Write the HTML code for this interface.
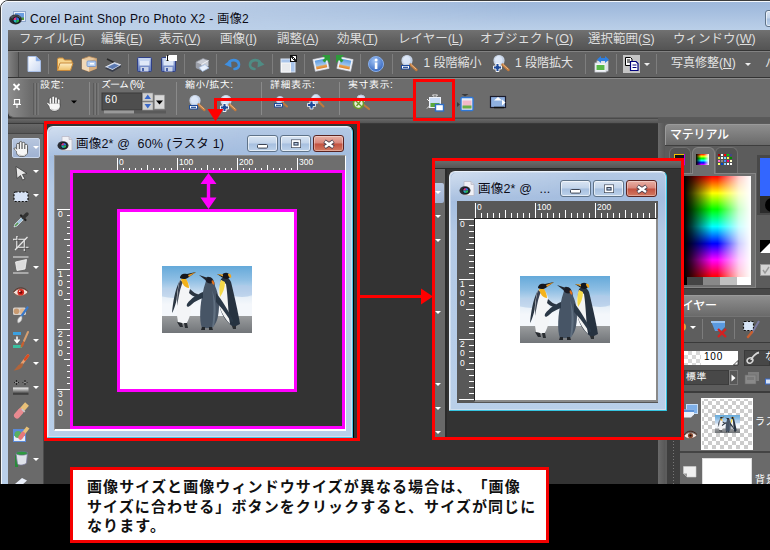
<!DOCTYPE html>
<html lang="ja">
<head>
<meta charset="utf-8">
<title>Corel Paint Shop Pro Photo X2 - 画像2</title>
<style>
html,body{margin:0;padding:0;background:#fff;}
body{width:770px;height:550px;overflow:hidden;position:relative;font-family:"Liberation Sans","Noto Sans CJK JP",sans-serif;font-size:12px;}
.a{position:absolute;}
#root{position:absolute;left:0;top:0;width:770px;height:550px;overflow:hidden;}
#frame{left:0;top:0;width:790px;height:560px;border:1px solid #3c3c3c;border-radius:8px 0 0 0;box-sizing:border-box;
 background:linear-gradient(180deg,#9db7da 0px,#a5bedf 10px,#b3c9e5 22px,#bbd0e9 30px,#bad0ea 100%);}
#glare{left:1px;top:1px;width:520px;height:29px;border-radius:7px 0 0 0;background:linear-gradient(90deg,rgba(255,255,255,.48) 0,rgba(255,255,255,.36) 150px,rgba(255,255,255,0) 100%);-webkit-mask-image:linear-gradient(180deg,#000 0,rgba(0,0,0,.1) 100%);mask-image:linear-gradient(180deg,#000 0,rgba(0,0,0,.1) 100%);}
#frame:before{content:"";position:absolute;left:0;top:0;right:0;bottom:0;border:1px solid #f4f8fc;border-radius:7px 0 0 0;}
#capbtn{left:765px;top:10px;width:20px;height:17px;box-sizing:border-box;border:1px solid #5f7389;border-radius:3px;background:linear-gradient(180deg,#d9e5f3 0,#c2d4ea 48%,#a6bfdf 52%,#bdd2ea 100%);box-shadow:inset 0 0 0 1px rgba(255,255,255,.6);}
#titletext{left:30px;top:9px;font-size:12px;color:#0a0a14;white-space:nowrap;letter-spacing:0.35px;}
#client{left:8px;top:30px;width:770px;height:520px;background:#333;}
#menubar{left:0;top:0;width:770px;height:20px;background:linear-gradient(180deg,#717171 0,#626262 45%,#545454 100%);border-bottom:1px solid #353535;}
.mi{position:absolute;top:1px;color:#dedede;font-size:12.5px;white-space:nowrap;line-height:17px;}
.mi u{text-decoration:underline;text-underline-offset:1px;}
#toolbar{left:0;top:21px;width:770px;height:26px;background:#626262;border-top:1px solid #828282;box-sizing:border-box;}
#tbgrip{left:0;top:0;width:10px;height:25px;background:linear-gradient(90deg,#828282,#626262);border-right:1px solid #474747;}
.sep{position:absolute;width:1px;background:#7a7a7a;top:3px;height:20px;}
.tbt{position:absolute;top:4px;color:#e4e4e4;font-size:12px;white-space:nowrap;line-height:17px;}
#optbar{left:0;top:48px;width:770px;height:40px;background:#6c6c6c;border:1px solid #8a8a8a;border-bottom-color:#5a5a5a;border-right:none;border-radius:0 0 0 6px;box-sizing:border-box;}
.ol{position:absolute;top:2px;color:#fff;font-size:10px;letter-spacing:.5px;white-space:nowrap;line-height:11px;font-family:"Liberation Sans","IPAGothic","Noto Sans CJK JP",sans-serif;}
.grip2{position:absolute;top:6px;width:4px;height:31px;border-left:1px solid #4a4a4a;border-right:1px solid #4a4a4a;box-sizing:border-box;}
.osep{position:absolute;top:3px;width:1px;height:34px;background:#555;}
#palette{left:8px;top:124px;width:36px;height:430px;background:#6a6a6a;border-right:1px solid #4c4c4c;box-sizing:border-box;}
#palgrip{left:0;top:0;width:35px;height:9px;background:linear-gradient(180deg,#686868,#575757);border-bottom:1px solid #454545;}
#palsel{left:4px;top:14px;width:28px;height:20px;background:linear-gradient(180deg,#b7c6de,#9fb2d2);border:1px solid #c9d6ea;border-radius:2px;box-sizing:border-box;}
.dd{position:absolute;width:0;height:0;border-left:3px solid transparent;border-right:3px solid transparent;border-top:3px solid #fff;}
.win{position:absolute;box-sizing:border-box;border:1px solid #eaf1fa;border-right-color:#4cc6e6;border-bottom-color:#4cc6e6;border-radius:6px 6px 1px 1px;background:linear-gradient(180deg,#b4c9e5 0,#a4bddf 26px,#b3c9e5 60px,#b9cfe9 100%);}
.win:before{content:"";position:absolute;left:0;top:0;right:0;bottom:0;border:1px solid rgba(255,255,255,.35);border-radius:5px 5px 0 0;}
.wglare{position:absolute;left:1px;top:1px;width:65%;height:28px;border-radius:5px 0 0 0;background:linear-gradient(90deg,rgba(255,255,255,.38) 0,rgba(255,255,255,.2) 40%,rgba(255,255,255,0) 100%);-webkit-mask-image:linear-gradient(180deg,#000 0,rgba(0,0,0,.15) 100%);mask-image:linear-gradient(180deg,#000 0,rgba(0,0,0,.15) 100%);}
.wtitle{position:absolute;left:28px;top:10px;letter-spacing:.2px;font-size:12.5px;color:#0c0c18;white-space:pre;line-height:15px;}
.wb{position:absolute;top:8px;height:17px;box-sizing:border-box;border:1px solid #5f7389;border-radius:3px;background:linear-gradient(180deg,#d9e5f3 0,#c2d4ea 48%,#a6bfdf 52%,#bdd2ea 100%);box-shadow:inset 0 0 0 1px rgba(255,255,255,.6);}
.wb.cl{border-color:#5a2320;background:linear-gradient(180deg,#e9b0a5 0,#d8867a 48%,#c2503f 52%,#d27a62 100%);box-shadow:inset 0 0 0 1px rgba(255,255,255,.35);}
.mg{position:absolute;box-sizing:border-box;border:3px solid #ff00ff;}
.red{position:absolute;box-sizing:border-box;border:3px solid #ff0000;}
#caption{left:70px;top:467px;width:479px;height:76px;background:#fff;box-sizing:border-box;border:3px solid #f40000;}
#captxt{left:14px;top:7px;font-weight:bold;font-size:15px;letter-spacing:1.1px;line-height:19.7px;color:#111;white-space:nowrap;text-spacing-trim:space-all;}
#band{left:0;top:484px;width:770px;height:66px;background:#000;}
#rpanel{left:660px;top:118px;width:110px;height:366px;background:#5c5c5c;}
.ph{position:absolute;background:linear-gradient(180deg,#8e8e8e 0,#7c7c7c 50%,#6a6a6a 100%);border-top:1px solid #9a9a9a;border-left:1px solid #9a9a9a;border-radius:4px 0 0 0;box-sizing:border-box;color:#fff;font-size:12px;font-weight:500;letter-spacing:-.2px;white-space:nowrap;}
svg{position:absolute;overflow:visible;}
svg text{font-family:"Liberation Sans","Noto Sans CJK JP",sans-serif;}
</style>
</head>
<body>
<div id="root">
<div id="frame" class="a"></div>
<div id="glare" class="a"></div>
<svg class="a" style="left:9px;top:10px" width="17" height="15" viewBox="0 0 17 15">
<rect x="4.500" y="1.500" width="12" height="10" fill="#e8eef8" stroke="#8ea6cc" stroke-width="1"/>
<rect x="6" y="3" width="9" height="5" fill="#6b9ee0"/><rect x="6" y="7.500" width="9" height="2.500" fill="#4f9a3c"/>
<ellipse cx="6.500" cy="9.500" rx="6.300" ry="5" fill="#2a2c34"/>
<ellipse cx="6.500" cy="7" rx="5" ry="1.800" fill="#5a5e6a" opacity=".7"/>
<circle cx="7.300" cy="10" r="3.600" fill="#0d0f15"/>
<path d="M4.500 10a2.800 2.800 0 0 1 2.800 -2.800v2.800z" fill="#e03a8a"/>
<path d="M7.300 7.200a2.800 2.800 0 0 1 2.800 2.800h-2.800z" fill="#3b6fe0"/>
<path d="M10.100 10a2.800 2.800 0 0 1 -2.800 2.800v-2.800z" fill="#2fb84a"/>
<path d="M7.300 12.800a2.800 2.800 0 0 1 -2.800 -2.800h2.800z" fill="#25b0c0"/>
</svg>
<div id="capbtn" class="a"></div>
<div id="titletext" class="a">Corel Paint Shop Pro Photo X2 - 画像2</div>
<div id="client" class="a">
<div id="menubar" class="a">
<span class="mi" style="left:11px">ファイル(<u>F</u>)</span>
<span class="mi" style="left:93px">編集(<u>E</u>)</span>
<span class="mi" style="left:151px">表示(<u>V</u>)</span>
<span class="mi" style="left:212px">画像(<u>I</u>)</span>
<span class="mi" style="left:269px">調整(<u>A</u>)</span>
<span class="mi" style="left:329px">効果(<u>T</u>)</span>
<span class="mi" style="left:390px">レイヤー(<u>L</u>)</span>
<span class="mi" style="left:472px">オブジェクト(<u>O</u>)</span>
<span class="mi" style="left:580px">選択範囲(<u>S</u>)</span>
<span class="mi" style="left:665px">ウィンドウ(<u>W</u>)</span>
</div>
<div id="toolbar" class="a"><div id="tbgrip" class="a"></div>
</div>
<div id="optbar" class="a"><div class="a" style="left:0;top:0;width:22px;height:38px;border-radius:0 0 0 5px;background:linear-gradient(90deg,#8c8c8c,#6c6c6c)"></div>
</div>
</div>
<svg class="a" style="left:0;top:0" width="770" height="550" viewBox="0 0 770 550"><defs>
<linearGradient id="gpage" x1="0" y1="0" x2="1" y2="1"><stop offset="0" stop-color="#ffffff"/><stop offset="1" stop-color="#c9d8f2"/></linearGradient>
<linearGradient id="gfold" x1="0" y1="0" x2="0" y2="1"><stop offset="0" stop-color="#fdeec4"/><stop offset="1" stop-color="#eec06a"/></linearGradient>
<linearGradient id="gfl" x1="0" y1="0" x2="0" y2="1"><stop offset="0" stop-color="#a9b9e2"/><stop offset="1" stop-color="#5f78ba"/></linearGradient>
<linearGradient id="glens" x1="0" y1="0" x2="1" y2="1"><stop offset="0" stop-color="#f4f8ff"/><stop offset="1" stop-color="#9db8e0"/></linearGradient>
<radialGradient id="ginfo" cx=".4" cy=".3" r=".8"><stop offset="0" stop-color="#9cc0f4"/><stop offset="1" stop-color="#2a5cb8"/></radialGradient>
<linearGradient id="gphoto" x1="0" y1="0" x2="0" y2="1"><stop offset="0" stop-color="#5b9ae0"/><stop offset=".6" stop-color="#9cc4ee"/><stop offset=".75" stop-color="#e8a04a"/><stop offset="1" stop-color="#d88030"/></linearGradient>
</defs><rect x="48" y="54" width="1" height="20" fill="#7e7e7e"/><rect x="128" y="54" width="1" height="20" fill="#7e7e7e"/><rect x="184" y="54" width="1" height="20" fill="#7e7e7e"/><rect x="216" y="54" width="1" height="20" fill="#7e7e7e"/><rect x="272" y="54" width="1" height="20" fill="#7e7e7e"/><rect x="304" y="54" width="1" height="20" fill="#7e7e7e"/><rect x="360" y="54" width="1" height="20" fill="#7e7e7e"/><rect x="392" y="54" width="1" height="20" fill="#7e7e7e"/><rect x="585" y="54" width="1" height="20" fill="#7e7e7e"/><rect x="616" y="54" width="1" height="20" fill="#7e7e7e"/><rect x="656" y="54" width="1" height="20" fill="#7e7e7e"/><g transform="translate(27 56)"><path d="M1 0.500h8l4.500 4.500v10.500h-12.500z" fill="url(#gpage)" stroke="#a9bfe6" stroke-width="1"/><path d="M9 0.500v4.500h4.500z" fill="#7da6e8" stroke="#a9bfe6" stroke-width=".6"/></g><g transform="translate(57 57)"><path d="M0.500 13.500v-11q0-1.500 1.500-1.500h4l1.500 2h6q1.500 0 1.500 1.500v2" fill="#f6d48c" stroke="#c98a3a" stroke-width="1"/><path d="M0.500 13.500l2.500-7.500h13l-2.500 7.500z" fill="url(#gfold)" stroke="#c98a3a" stroke-width="1"/></g><g transform="translate(81 56)"><path d="M1 3l7-2.500 7.500 2v10l-7.500 3-7-2.500z" fill="#e8c9a0" stroke="#b98a58" stroke-width=".8"/><path d="M8 5.200l7.500-2.700v10l-7.500 3z" fill="#d9b080"/><path d="M1 3l7 2.200v10.300l-7-2.500z" fill="#f0d8b8"/><rect x="6" y="5" width="9" height="5.500" rx="1" fill="#b8d0f0" stroke="#6d8fc8" stroke-width=".8"/><rect x="9" y="7" width="4" height="1.500" fill="#fff"/></g><g transform="translate(105 57)"><path d="M2 2L12 7" stroke="#2a2a2a" stroke-width="1.600"/><path d="M0.500 10l9-4.500 6.500 2.500-8.500 5z" fill="#c8d4ea" stroke="#e8eef8" stroke-width=".8"/><path d="M2.500 10l7-3.300 4.500 1.800-6.500 3.600z" fill="#5a78b0"/><path d="M0.500 10v1.800l7 3.200 8.500-5v-2l-8.500 5z" fill="#3a3f4c"/></g><g transform="translate(137 57)"><rect x="0.500" y="0.500" width="14" height="14" rx="1" fill="url(#gfl)" stroke="#2f3f86" stroke-width="1"/><rect x="2.500" y="1" width="10" height="7.500" fill="#dfe8f8"/><rect x="2.500" y="1" width="10" height="3" fill="#c4d4f0"/><rect x="3.500" y="10" width="8" height="4.500" fill="#c8d2e8"/><rect x="5" y="11" width="2" height="3" fill="#4a63a8"/></g><g transform="translate(161 57)"><rect x="0.500" y="0.500" width="14" height="14" rx="1" fill="url(#gfl)" stroke="#2f3f86" stroke-width="1"/><rect x="2.500" y="1" width="10" height="7.500" fill="#dfe8f8"/><rect x="2.500" y="1" width="10" height="3" fill="#c4d4f0"/><rect x="3.500" y="10" width="8" height="4.500" fill="#c8d2e8"/><rect x="5" y="11" width="2" height="3" fill="#4a63a8"/><rect x="5" y="-2" width="11" height="6" fill="#fff"/><path d="M6.500 -1.500v5M5.500 -1.500h2M5.500 3.500h2" stroke="#111" stroke-width="1"/></g><g transform="translate(193 57)"><path d="M3 5l7-3.500 5.500 2v5.500l-7 4-5.500-2.500z" fill="#c9ccd4" stroke="#8e929c" stroke-width=".7"/><path d="M3 5l5.500 2.500v6l-5.500-2.500z" fill="#9a9ea8"/><path d="M8.500 7.500l7-4" stroke="#f0f2f6" stroke-width="1"/><path d="M6 10.500l6-3 4 3.500-6.500 3.500z" fill="#e8f0fc" stroke="#9ab4dc" stroke-width=".7"/></g><g transform="translate(224 59)"><path d="M5.500 2.500C9 0 14.500 1 15 5.500C15.300 8.500 12.500 10 10.500 10" fill="none" stroke="#3f8fe0" stroke-width="2.600" stroke-linecap="round"/><path d="M0.500 5.500L7 0.500L7.500 8.500Z" fill="#3f8fe0"/></g><g transform="translate(249 59)"><path d="M10.500 2.500C7 0 1.500 1 1 5.500C0.700 8.500 3.500 10 5.500 10" fill="none" stroke="#4f8c84" stroke-width="2.600" stroke-linecap="round"/><path d="M15.500 5.500L9 0.500L8.500 8.500Z" fill="#4f8c84"/></g><g transform="translate(280 55)"><rect x="1" y="4" width="14" height="13" fill="#a9c4ea" stroke="#dbe6f6" stroke-width="1"/><rect x="1.500" y="8" width="9" height="9" fill="#e8eaee" stroke="#f8f8f8" stroke-width="1"/><rect x="10" y="0" width="7" height="7" fill="#111"/><path d="M11.500 5.500l4-4M11.500 2.800v2.700h2.700M15.500 4.200v-2.700h-2.700" stroke="#fff" stroke-width="1" fill="none"/></g><g transform="translate(313 55)"><g transform="rotate(-12 8 9)"><rect x="1" y="3" width="14" height="12" fill="#f4f6fa" stroke="#d0d6e2" stroke-width=".6"/><rect x="2.500" y="4.500" width="11" height="9" fill="url(#gphoto)"/></g><path d="M9 0h8v8l-3-3-2.500 2.500-2-2 2.500-2.500z" fill="#2d9a3a"/></g><g transform="translate(336 55)"><g transform="translate(17 0) scale(-1 1)"><g transform="rotate(-12 8 9)"><rect x="1" y="3" width="14" height="12" fill="#f4f6fa" stroke="#d0d6e2" stroke-width=".6"/><rect x="2.500" y="4.500" width="11" height="9" fill="url(#gphoto)"/></g></g><path d="M8 0h-8v8l3-3 2.500 2.500 2-2-2.500-2.500z" fill="#2d9a3a"/></g><g transform="translate(368 56)"><circle cx="8" cy="8" r="7.500" fill="url(#ginfo)" stroke="#8ab0ea" stroke-width="1"/><rect x="6.800" y="6.500" width="2.600" height="6.500" fill="#fff"/><circle cx="8.100" cy="4" r="1.500" fill="#fff"/></g><g transform="translate(401 55)"><circle cx="6" cy="5.500" r="5" fill="url(#glens)" stroke="#c8d4e6" stroke-width="1.200"/><circle cx="6" cy="5.500" r="3.600" fill="#dfe9f8" opacity=".8"/><path d="M9.500 9.500L15.500 15" stroke="#c27a3c" stroke-width="2.400" stroke-linecap="round"/><path d="M9.800 9.300L15.300 14.300" stroke="#e9b98a" stroke-width="1"/><rect x="0.500" y="10.500" width="8" height="3.500" fill="#fff" stroke="#1e4a9a" stroke-width="1"/><rect x="2" y="11.700" width="5" height="1.200" fill="#1e4a9a"/></g><g transform="translate(493 55)"><circle cx="6" cy="5.500" r="5" fill="url(#glens)" stroke="#c8d4e6" stroke-width="1.200"/><circle cx="6" cy="5.500" r="3.600" fill="#dfe9f8" opacity=".8"/><path d="M9.500 9.500L15.500 15" stroke="#c27a3c" stroke-width="2.400" stroke-linecap="round"/><path d="M9.800 9.300L15.300 14.300" stroke="#e9b98a" stroke-width="1"/><path d="M3 8.500h3v2.500h2.500v3h-2.500v2.500h-3v-2.500h-2.500v-3h2.500z" fill="#1e4a9a" stroke="#fff" stroke-width=".9"/></g><g transform="translate(594 56)"><rect x="3" y="5" width="11" height="10" fill="#e8ecf2" stroke="#c8ccd4" stroke-width=".8"/><rect x="1" y="7" width="11" height="9" fill="#f4f6fa" stroke="#d0d4dc" stroke-width=".8"/><rect x="2.500" y="9" width="8" height="5" fill="#58b848"/><path d="M3 3.500l4-3.500v2h4v-2l4 3.500-4 3.500v-2h-4v2z" fill="#2f7fe0"/></g><g transform="translate(623 55)"><rect x="0" y="0" width="17" height="18" fill="#c4c4c4"/><path d="M2.500 2.500h5l1.500 1.500v6.500h-6.500z" fill="#fff" stroke="#000" stroke-width="1"/><path d="M4 5h3M4 7h3" stroke="#000" stroke-width="1"/><path d="M7.500 6.500h5.500l2 2v7h-7.500z" fill="#fff" stroke="#00007a" stroke-width="1.200"/><path d="M9.500 10h4M9.500 12.500h4" stroke="#00007a" stroke-width="1"/></g><path d="M644 63h6l-3 3z" fill="#eee"/><path d="M745 63h6l-3 3z" fill="#eee"/></svg><div class="tbt" style="left:423.500px;top:55px">1 段階縮小</div><div class="tbt" style="left:515px;top:55px">1 段階拡大</div><div class="tbt" style="left:671px;top:55px">写真修整(<u>N</u>)</div><div class="tbt" style="left:765px;top:55px">パ</div>
<svg class="a" style="left:0;top:0" width="770" height="550" viewBox="0 0 770 550"><path d="M13.500 84l6 6M19.500 84l-6 6" stroke="#fff" stroke-width="1.800"/><path d="M14.500 99.500h5v4.500h-5zM13 104.500h8M17 104.500v3.500" stroke="#fff" stroke-width="1.200" fill="none"/><rect x="33.5" y="83" width="1" height="32" fill="#4a4a4a"/><rect x="34.5" y="83" width="1" height="32" fill="#868686"/><rect x="36.5" y="83" width="1" height="32" fill="#4a4a4a"/><rect x="37.5" y="83" width="1" height="32" fill="#868686"/><rect x="93.5" y="83" width="1" height="32" fill="#4a4a4a"/><rect x="94.5" y="83" width="1" height="32" fill="#868686"/><rect x="96.5" y="83" width="1" height="32" fill="#4a4a4a"/><rect x="97.5" y="83" width="1" height="32" fill="#868686"/><rect x="89" y="82" width="1" height="33" fill="#8a8a8a"/><rect x="176" y="82" width="1" height="33" fill="#8a8a8a"/><rect x="261" y="82" width="1" height="33" fill="#8a8a8a"/><rect x="339" y="82" width="1" height="33" fill="#8a8a8a"/><g transform="translate(45.5 95.5)"><g transform="scale(1.100 1)"><g stroke="#4a4a4a" stroke-width=".8" fill="#f6f6f6"><path d="M5 12L1.300 8.300C0.500 7.300 1.800 6.200 2.800 7.200L5.500 10Z"/><rect x="3.300" y="2.300" width="2.500" height="9" rx="1.250"/><rect x="5.800" y="0.600" width="2.500" height="10" rx="1.250"/><rect x="8.300" y="1.300" width="2.500" height="10" rx="1.250"/><rect x="10.800" y="3.300" width="2.400" height="8" rx="1.200"/><path d="M3.300 8.500V11.500C3.300 14 5.500 15.500 8 15.500C11 15.500 13.200 14 13.200 11V8.500Z"/></g><path d="M3.800 8V11.500C4 13.500 6 15 8 15C10.500 15 12.700 13.800 12.700 11V8Z" fill="#f6f6f6"/><path d="M2.500 8.500L5 11" stroke="#f6f6f6" stroke-width="1.400"/><path d="M5 13.500C7 15 10 15 12 13" stroke="#c8c8c8" stroke-width="1" fill="none"/></g></g><path d="M71 100.500h6l-3 3z" fill="#000"/><rect x="102" y="93" width="40" height="17" fill="#4e4e4e" stroke="#3a3a3a" stroke-width="1"/><rect x="104" y="110.500" width="62" height="3" fill="#5a5a5a"/><rect x="104" y="110.500" width="30" height="3" fill="#9a9a9a"/><rect x="142.500" y="93" width="10.500" height="8" fill="#d0d0d0" stroke="#8a8a8a" stroke-width=".6"/><rect x="142.500" y="102" width="10.500" height="8" fill="#d0d0d0" stroke="#8a8a8a" stroke-width=".6"/><path d="M144.500 99h6.500l-3.250-4.500z" fill="#3a68c8"/><path d="M144.500 104h6.500l-3.250 4.500z" fill="#3a68c8"/><rect x="154.500" y="95" width="10" height="14" fill="#d8d8d8" stroke="#999" stroke-width=".6"/><path d="M156 100.500h7l-3.500 4z" fill="#000"/><g transform="translate(189 95)"><circle cx="6" cy="5.500" r="5" fill="url(#glens)" stroke="#c8d4e6" stroke-width="1.200"/><circle cx="6" cy="5.500" r="3.600" fill="#dfe9f8" opacity=".8"/><path d="M9.500 9.500L15.500 15" stroke="#c27a3c" stroke-width="2.400" stroke-linecap="round"/><path d="M9.800 9.300L15.300 14.300" stroke="#e9b98a" stroke-width="1"/><rect x="0.500" y="10.500" width="8" height="3.500" fill="#fff" stroke="#1e4a9a" stroke-width="1"/><rect x="2" y="11.700" width="5" height="1.200" fill="#1e4a9a"/></g><g transform="translate(220 95)"><circle cx="6" cy="5.500" r="5" fill="url(#glens)" stroke="#c8d4e6" stroke-width="1.200"/><circle cx="6" cy="5.500" r="3.600" fill="#dfe9f8" opacity=".8"/><path d="M9.500 9.500L15.500 15" stroke="#c27a3c" stroke-width="2.400" stroke-linecap="round"/><path d="M9.800 9.300L15.300 14.300" stroke="#e9b98a" stroke-width="1"/><path d="M3 8.500h3v2.500h2.500v3h-2.500v2.500h-3v-2.500h-2.500v-3h2.500z" fill="#1e4a9a" stroke="#fff" stroke-width=".9"/></g><g transform="translate(273 96)"><circle cx="7" cy="4" r="3.600" fill="url(#glens)" stroke="#b8c6dc" stroke-width="1"/><path d="M9.500 6.500L14 10.500" stroke="#c27a3c" stroke-width="2" stroke-linecap="round"/><rect x="1.500" y="7.500" width="8" height="3.500" fill="#fff" stroke="#1e4a9a" stroke-width="1"/><rect x="3" y="8.700" width="5" height="1.200" fill="#1e4a9a"/></g><g transform="translate(307 94)"><circle cx="9" cy="5" r="4.500" fill="url(#glens)" stroke="#b8c6dc" stroke-width="1"/><path d="M12 8L16.500 12.500" stroke="#c27a3c" stroke-width="2" stroke-linecap="round"/><path d="M3 7h3v2.500h2.500v3h-2.500v2.500h-3v-2.500h-2.500v-3h2.500z" fill="#1e4a9a" stroke="#fff" stroke-width=".8"/></g><g transform="translate(352 94)"><circle cx="9" cy="5" r="4" fill="url(#glens)" stroke="#b8c6dc" stroke-width="1"/><path d="M10 9.500L17 15" stroke="#c27a3c" stroke-width="2.200" stroke-linecap="round"/><circle cx="6.500" cy="9.500" r="5" fill="#e8f0d8" stroke="#6a9a2a" stroke-width="1.600"/><path d="M3 6l7 7M4.500 12l4-5" stroke="#6a9a2a" stroke-width="1.300"/></g><g transform="translate(427 95)"><path d="M0 4l2.500 2.500M2.500 11l-2.500 2.500M5.500 0h5l-2.500 2.500z" fill="#333" stroke="#eee" stroke-width="1"/><rect x="2.500" y="2.500" width="11" height="10" fill="#c9dcf6" stroke="#eef3fb" stroke-width="1"/><rect x="3.500" y="8" width="9" height="4" fill="#5aa83c"/><rect x="8.500" y="9.500" width="8" height="6.500" fill="#fff" stroke="#2f6fc8" stroke-width="1.400"/></g><g transform="translate(457 94)"><path d="M4.500 0h7l-3.500 2.500z" fill="#3a3a3a"/><path d="M0 8l3 2.500-3 2.500z" fill="#3a3a3a"/><rect x="4" y="3.500" width="12" height="13" rx="1" fill="#e8eef8" stroke="#2f78d8" stroke-width="1.400"/><rect x="5.500" y="6.500" width="9" height="8" fill="#f2b8c8"/><rect x="5.500" y="11.500" width="9" height="3" fill="#68b048"/></g><g transform="translate(490 95)"><rect x="0.500" y="1.500" width="15" height="11" fill="#8fb0e0" stroke="#1a1a2a" stroke-width="1.200"/><path d="M4 5.500h8l-4-3.500z" fill="#fff"/><path d="M12 4.500v6l3.500-3z" fill="#fff"/><path d="M4 12.500h10" stroke="#111" stroke-width="1.500"/></g></svg><div class="ol" style="left:40px;top:79px">設定:</div><div class="ol" style="left:101px;top:79px;letter-spacing:-1px">ズーム (%):</div><div class="ol" style="left:185px;top:79px">縮小/拡大:</div><div class="ol" style="left:270px;top:79px">詳細表示:</div><div class="ol" style="left:348px;top:79px">実寸表示:</div><div class="a" style="left:105px;top:94px;color:#fff;font-size:10px;letter-spacing:1px;line-height:11px">60</div>
<div class="a" style="left:8px;top:118px;width:762px;height:6px;background:linear-gradient(180deg,#4a4a4a 0,#4a4a4a 1px,#686868 1px,#545454 5px,#3a3a3a 5px)"></div>
<div id="palette" class="a"><div id="palgrip" class="a"></div><div id="palsel" class="a"></div>
</div><svg class="a" style="left:0;top:0" width="770" height="550" viewBox="0 0 770 550"><g transform="translate(13 141)"><g transform="scale(1.100 1)"><g stroke="#4a4a4a" stroke-width=".8" fill="#f6f6f6"><path d="M5 12L1.300 8.300C0.500 7.300 1.800 6.200 2.800 7.200L5.500 10Z"/><rect x="3.300" y="2.300" width="2.500" height="9" rx="1.250"/><rect x="5.800" y="0.600" width="2.500" height="10" rx="1.250"/><rect x="8.300" y="1.300" width="2.500" height="10" rx="1.250"/><rect x="10.800" y="3.300" width="2.400" height="8" rx="1.200"/><path d="M3.300 8.500V11.500C3.300 14 5.500 15.500 8 15.500C11 15.500 13.200 14 13.200 11V8.500Z"/></g><path d="M3.800 8V11.500C4 13.500 6 15 8 15C10.500 15 12.700 13.800 12.700 11V8Z" fill="#f6f6f6"/><path d="M2.500 8.500L5 11" stroke="#f6f6f6" stroke-width="1.400"/><path d="M5 13.500C7 15 10 15 12 13" stroke="#c8c8c8" stroke-width="1" fill="none"/></g></g><path d="M33 146h6l-3 3z" fill="#fff"/><g transform="translate(15 166)"><path d="M1 0.500L12 7.500L7.500 8.500L10 13L7.500 14L5.500 9.500L2 12.500Z" fill="#e8e8e8" stroke="#3a3a3a" stroke-width=".8"/></g><path d="M33 170h6l-3 3z" fill="#fff"/><g transform="translate(13.5 191.5)"><rect x="0.500" y="0.500" width="14" height="9.500" rx="1.500" fill="#d7e3f6" stroke="#111" stroke-width="1.200" stroke-dasharray="2 1.500"/></g><path d="M33 194h6l-3 3z" fill="#fff"/><g transform="translate(13 212)"><path d="M1 15L2 12L9 5L11 7L4 14Z" fill="#9fc0d8" stroke="#dfe8f0" stroke-width=".7"/><path d="M2 14l3-3" stroke="#5a9a4a" stroke-width="1.400"/><path d="M8 3.500l4.500 4.500" stroke="#222" stroke-width="2.200" stroke-linecap="round"/><path d="M10.500 5.500L14 2" stroke="#333" stroke-width="3.400" stroke-linecap="round"/></g><g transform="translate(13 236)"><path d="M4 0v11.500h11.500M0 3.500h11.500v11.500" fill="none" stroke="#e8e8e8" stroke-width="1.600"/><path d="M4 0v11.500h11.500M0 3.500h11.500v11.500" fill="none" stroke="#2a2a2a" stroke-width=".6" transform="translate(.8 .8)"/><path d="M2 14L14.500 1" stroke="#e8e8e8" stroke-width="1.200"/></g><g transform="translate(13 256.5)"><path d="M0 0.500h15.500M0 16.500h15.500" stroke="#e8e8e8" stroke-width="1.200"/><path d="M2.500 5.500l11-2.500-1.500 9.500-8 1.500z" fill="#dcdcdc" stroke="#f4f4f4" stroke-width=".8"/></g><path d="M33 266h6l-3 3z" fill="#fff"/><g transform="translate(13 286)"><path d="M0.500 6.500C4 1.500 11 1.500 15 6C11 11 4 11 0.500 6.500Z" fill="#f2e4dc" stroke="#8a5a4a" stroke-width=".8"/><circle cx="7.800" cy="6.300" r="3.300" fill="#d8281e"/><circle cx="7.800" cy="6.300" r="1.500" fill="#7a0a08"/><circle cx="6.800" cy="5.300" r=".8" fill="#fff"/><path d="M0.500 6C4 0.500 11 0.500 15 5.500" fill="none" stroke="#5a3a30" stroke-width="1"/></g><g transform="translate(13 307)"><rect x="0" y="0.500" width="13" height="7.500" rx="1.500" fill="#d8d0c8"/><circle cx="3.500" cy="4.300" r="2.800" fill="#c89a70"/><circle cx="9.500" cy="4.300" r="2.800" fill="#e0b890"/><path d="M14.500 0.500L8.500 9" stroke="#3a78c8" stroke-width="2.200" stroke-linecap="round"/><path d="M8.500 9C10 12 8 15 5 16C4 13 5 10.500 8.500 9Z" fill="#e8e8e8" stroke="#aaa" stroke-width=".6"/></g><g transform="translate(13 332)"><rect x="0" y="0" width="8" height="3" fill="#3aa0e0"/><rect x="0" y="13" width="9" height="3" fill="#3ac0a0"/><path d="M4 4.500v5M1.500 7.500l2.500 3 2.500-3" fill="none" stroke="#fff" stroke-width="1.500"/><path d="M15 0L11 9" stroke="#d8a070" stroke-width="2" stroke-linecap="round"/><path d="M11 9C12 12 10 15 7.500 16C7.500 13 8.500 10.500 11 9Z" fill="#c86030"/></g><path d="M33 339h6l-3 3z" fill="#fff"/><g transform="translate(13 355)"><path d="M15 0.500L9 8.500" stroke="#e8a070" stroke-width="2.600" stroke-linecap="round"/><path d="M15 0.500L12 4.500" stroke="#d84a20" stroke-width="2.600" stroke-linecap="round"/><path d="M9.500 8C11.500 11 7 15.500 0.500 15.500C4 13 4 9.500 9.500 8Z" fill="#b0643a"/></g><path d="M33 362h6l-3 3z" fill="#fff"/><g transform="translate(13 379)"><path d="M1 3.500h5M3.500 1v5M9.500 3.500h5M12 1v5" stroke="#222" stroke-width="1.100"/><path d="M2 3.500h3M10.500 3.500h3" stroke="#ddd" stroke-width=".6"/><linearGradient id="gld" x1="0" y1="0" x2="0" y2="1"><stop offset="0" stop-color="#f2f2f2"/><stop offset="1" stop-color="#222"/></linearGradient><rect x="0" y="8.500" width="15.500" height="7" fill="url(#gld)"/></g><path d="M33 386h6l-3 3z" fill="#fff"/><g transform="translate(13 403)"><path d="M14 1L7 9" stroke="#e8c078" stroke-width="5" stroke-linecap="butt"/><path d="M7.500 8.500L4 12.500" stroke="#e88a90" stroke-width="6" stroke-linecap="round"/><path d="M8.800 6.200l3 2.600" stroke="#c8c8d0" stroke-width="1.600"/></g><g transform="translate(13 427)"><rect x="0" y="2" width="13" height="13" fill="#5a8ad8"/><rect x="1" y="9" width="11" height="5" fill="#e8eef8"/><circle cx="5" cy="7.500" r="3.500" fill="#58b060"/><path d="M15 0.500L10 7" stroke="#e8c078" stroke-width="3.600"/><path d="M10 7L7.500 10.500" stroke="#e8787a" stroke-width="4.600" stroke-linecap="round"/></g><g transform="translate(13 450)"><path d="M2 4v13h3v-9z" fill="#2a8a3a"/><path d="M3 3.500C5 1.500 12 1 14.500 2.500L13.500 13C11 15.500 6 15.500 4.500 14Z" fill="#dfe3ea" stroke="#7a7a9a" stroke-width=".8"/><ellipse cx="8.800" cy="3.200" rx="5.700" ry="1.900" fill="#2e9a40" stroke="#6a6a8a" stroke-width=".7"/></g><path d="M33 458h6l-3 3z" fill="#fff"/><g transform="translate(13 477)"><path d="M2 7L9 1l5 2.500L8 9z" fill="#e8eef8"/></g></svg><div>
</div>
<div class="a" style="left:658px;top:118px;width:112px;height:366px;background:#5c5c5c"></div><div class="a" style="left:658px;top:118px;width:112px;height:5px;background:#595959"></div><div class="a" style="left:658px;top:123px;width:7px;height:361px;background:linear-gradient(90deg,#6a6a6a,#585858)"></div><div class="ph" style="left:665px;top:124px;width:110px;height:21px;line-height:20px;padding-left:4px">マテリアル</div><div class="a" style="left:665px;top:145px;width:105px;height:1px;background:#3e3e3e"></div><div class="a" style="left:669px;top:147px;width:22px;height:26px;background:#535353;border:1px solid #707070;border-bottom:none;border-radius:6px 6px 0 0;box-sizing:border-box"></div><div class="a" style="left:715px;top:147px;width:23px;height:26px;background:#535353;border:1px solid #707070;border-bottom:none;border-radius:6px 6px 0 0;box-sizing:border-box"></div><div class="a" style="left:665px;top:173px;width:91px;height:115px;background:#6e6e6e;border:1px solid #858585;box-sizing:border-box"></div><div class="a" style="left:692px;top:147px;width:23px;height:27px;background:#6e6e6e;border:1px solid #858585;border-bottom:none;border-radius:6px 6px 0 0;box-sizing:border-box"></div><div class="a" style="left:684px;top:176px;width:67px;height:101px;background:linear-gradient(180deg,#f00 0%,#ff0 17%,#0f0 33%,#0ff 50%,#00f 67%,#f0f 83%,#f00 100%)"></div><div class="a" style="left:684px;top:176px;width:67px;height:101px;background:linear-gradient(90deg,#000 0%,rgba(0,0,0,.75) 12%,rgba(0,0,0,0) 42%,rgba(255,255,255,0) 50%,rgba(255,255,255,.8) 82%,#fff 100%)"></div><div class="a" style="left:684px;top:277px;width:67px;height:8px;background:linear-gradient(90deg,#000 0,#000 3px,#444 3px,#444 19px,#888 19px,#888 36px,#c0c0c0 36px,#c0c0c0 53px,#fff 53px)"></div><div class="a" style="left:757px;top:155px;width:13px;height:60px;background:#484848"></div><div class="a" style="left:760px;top:158px;width:10px;height:38px;background:#3366ff"></div><div class="a" style="left:760px;top:196px;width:10px;height:17px;background:#2c2c2c"></div><div class="a" style="left:765px;top:198px;width:14px;height:14px;border-radius:7px;background:#000"></div><svg class="a" style="left:760px;top:240px" width="10" height="14" viewBox="0 0 10 14"><rect width="10" height="13" fill="#000"/><path d="M0 13L10 3V13Z" fill="#fff"/></svg><div class="a" style="left:760px;top:264px;width:12px;height:12px;background:#d4d4d4;border:1px solid #999;box-sizing:border-box"></div><svg class="a" style="left:762px;top:266px" width="8" height="8" viewBox="0 0 8 8"><path d="M1 4l2 3 4-6" stroke="#999" stroke-width="1.400" fill="none"/></svg><div class="a" style="left:665px;top:288px;width:105px;height:7px;background:#484848;border-top:1px solid #3a3a3a"></div><div class="ph" style="left:665px;top:295px;width:110px;height:21px;line-height:20px;padding-left:4px">レイヤー</div><div class="a" style="left:665px;top:316px;width:105px;height:27px;background:#5e5e5e;border-top:1px solid #747474;border-bottom:1px solid #3a3a3a;box-sizing:border-box"></div><svg class="a" style="left:0;top:0" width="770" height="550" viewBox="0 0 770 550"><path d="M690 326h6l-3 3z" fill="#fff"/><rect x="702" y="319" width="1" height="20" fill="#7c7c7c"/><rect x="734" y="319" width="1" height="20" fill="#7c7c7c"/><circle cx="682" cy="327" r="4" fill="#e0a040"/><path d="M711 321h14v6l-4 4h-6z" fill="#5a9ae0"/><path d="M711 321h14v2h-14z" fill="#9cc4f0"/><path d="M718 329l8 8M726 329l-8 8" stroke="#d82020" stroke-width="2.200"/><rect x="743.500" y="321.500" width="10" height="9" rx="1" fill="#d8e6f8" stroke="#111" stroke-width="1.200" stroke-dasharray="2 1.500"/><path d="M759 321L752 333" stroke="#7a7aa0" stroke-width="2"/><path d="M752 332l-4 5" stroke="#c86030" stroke-width="2.400" stroke-linecap="round"/></svg><div class="a" style="left:684px;top:351px;width:54px;height:14px;background:#fff"></div><div class="a" style="left:684px;top:351px;width:17px;height:14px;background-color:#fff;background-image:conic-gradient(#d8d8d8 25%,#fff 0 50%,#d8d8d8 0 75%,#fff 0);background-size:8px 8px"></div><div class="a" style="left:704px;top:351px;font-size:10px;line-height:12px;color:#000;letter-spacing:.8px">100</div><svg class="a" style="left:733px;top:360px" width="5" height="5" viewBox="0 0 5 5"><path d="M0.500 5L5 0.500V5Z" fill="none" stroke="#222" stroke-width=".8"/></svg><div class="a" style="left:744px;top:350px;width:26px;height:16px;background:#474747;border:1px solid #3a3a3a;box-sizing:border-box"></div><svg class="a" style="left:746px;top:351px" width="16" height="14" viewBox="0 0 16 14"><path d="M13 1.500C10 2 6 6 5 9" stroke="#d8d8d8" stroke-width="1.800" fill="none"/><ellipse cx="4" cy="9.500" rx="3" ry="2.500" fill="none" stroke="#d8d8d8" stroke-width="1.500" transform="rotate(-35 4 9.500)"/></svg><div class="a" style="left:765px;top:351px;font-size:10px;line-height:12px;color:#fff">な</div><div class="a" style="left:684px;top:370px;width:45px;height:15px;background:#484848;border:1px solid #3c3c3c;box-sizing:border-box"></div><div class="a" style="left:686px;top:371px;font-size:10px;line-height:12px;color:#fff;letter-spacing:.5px;font-family:'Liberation Sans','IPAGothic',sans-serif">標準</div><div class="a" style="left:729px;top:370px;width:9px;height:15px;background:#585858;border:1px solid #7a7a7a;box-sizing:border-box"></div><svg class="a" style="left:731px;top:374px" width="5" height="8" viewBox="0 0 5 8"><path d="M0.500 0.500v7l4-3.500z" fill="#fff"/></svg><svg class="a" style="left:744px;top:371px" width="26" height="16" viewBox="0 0 26 16"><rect x="4" y="1" width="11" height="9" fill="#7e7e7e"/><rect x="1" y="4" width="11" height="9" fill="#8a8a8a" stroke="#6a6a6a" stroke-width=".6"/><rect x="3" y="6" width="7" height="3" fill="#7a7a7a"/><rect x="21.500" y="8" width="5" height="5" fill="#d8e4f6" stroke="#3a6ac8" stroke-width="1"/></svg><div class="a" style="left:665px;top:391px;width:105px;height:2px;background:#3c3c3c"></div><div class="a" style="left:680px;top:393px;width:90px;height:58px;background:#6a6a6a"></div><div class="a" style="left:680px;top:451px;width:90px;height:2px;background:#444"></div><div class="a" style="left:680px;top:453px;width:90px;height:31px;background:#6a6a6a"></div><div class="a" style="left:667px;top:393px;width:13px;height:91px;background:#3e3e3e"></div><div class="a" style="left:673px;top:393px;width:1px;height:91px;background:repeating-linear-gradient(180deg,#777 0,#777 1px,transparent 1px,transparent 3px)"></div><div class="a" style="left:701px;top:398px;width:52px;height:52px;background-color:#fff;background-image:conic-gradient(#ccc 25%,#fff 0 50%,#ccc 0 75%,#fff 0);background-size:8px 8px;background-position:2px 2px;border:1px solid #fff;box-sizing:border-box"></div><div class="a" style="left:702px;top:458px;width:50px;height:30px;background:#fff;border:1px solid #ddd;box-sizing:border-box"></div><svg class="a" style="left:683px;top:403px" width="16" height="40" viewBox="0 0 16 40"><rect x="3.500" y="1.500" width="11" height="9" fill="#7fb0e8" stroke="#c4dcf6" stroke-width="1"/><path d="M1 6.500h10v5l-3 3h-7z" fill="#e8f0fa"/><path d="M1 6.500h10v2.500h-10z" fill="#5a92d8"/><path d="M1 33C4 28.500 10 28.500 14 32.500C10 36.500 4 36.500 1 33Z" fill="#f4ece8" stroke="#6a4a40" stroke-width=".7"/><circle cx="7.500" cy="32.500" r="2.600" fill="#8a4a30"/><circle cx="7.500" cy="32.500" r="1.100" fill="#1a0a08"/><path d="M1 32C4 27 10 27 14 31.500" fill="none" stroke="#4a2a20" stroke-width="1"/></svg><svg class="a" style="left:683px;top:466px" width="14" height="12" viewBox="0 0 14 12"><path d="M0.500 0.500h12.500v10.500h-9l-3.500-3.500z" fill="#f0f0f0" stroke="#cfcfcf" stroke-width=".6"/><path d="M0.500 7.500h3.500v3.500z" fill="#9a9a9a"/></svg><div class="a" style="left:755px;top:416px;font-size:10px;line-height:12px;color:#fff;white-space:nowrap;letter-spacing:1px">ラスタ 1</div><div class="a" style="left:755px;top:474px;font-size:10px;line-height:12px;color:#fff;white-space:nowrap;letter-spacing:1px">背景</div>
<svg class="a" style="left:0;top:0" width="770" height="550" viewBox="0 0 770 550"><defs><linearGradient id="gt1" x1="0" y1="0" x2="0" y2="1"><stop offset="0" stop-color="#f00"/><stop offset=".2" stop-color="#ff0"/><stop offset=".4" stop-color="#0f0"/><stop offset=".6" stop-color="#0ff"/><stop offset=".8" stop-color="#00f"/><stop offset="1" stop-color="#f0f"/></linearGradient><linearGradient id="gt2" x1="0" y1="0" x2="1" y2="0"><stop offset="0" stop-color="#000"/><stop offset=".4" stop-color="#000" stop-opacity="0"/><stop offset=".6" stop-color="#fff" stop-opacity="0"/><stop offset="1" stop-color="#fff"/></linearGradient></defs><rect x="674.500" y="154.500" width="10" height="10" fill="#111" stroke="#f0c000" stroke-width="1"/><path d="M684.500 154v11h-10" fill="none" stroke="#c000e0" stroke-width="1"/><rect x="696" y="154" width="13" height="11" fill="url(#gt1)"/><rect x="696" y="154" width="13" height="11" fill="url(#gt2)"/><rect x="718" y="154" width="2" height="2" fill="#a00"/><rect x="721" y="154" width="2" height="2" fill="#fff"/><rect x="724" y="154" width="2" height="2" fill="#f00"/><rect x="727" y="154" width="2" height="2" fill="#0c0"/><rect x="730" y="154" width="2" height="2" fill="#448"/><rect x="718" y="157" width="2" height="2" fill="#dd4"/><rect x="721" y="157" width="2" height="2" fill="#fff"/><rect x="724" y="157" width="2" height="2" fill="#8df"/><rect x="727" y="157" width="2" height="2" fill="#ff4"/><rect x="730" y="157" width="2" height="2" fill="#080"/><rect x="718" y="160" width="2" height="2" fill="#f6c"/><rect x="721" y="160" width="2" height="2" fill="#888"/><rect x="724" y="160" width="2" height="2" fill="#48f"/><rect x="727" y="160" width="2" height="2" fill="#f06"/><rect x="730" y="160" width="2" height="2" fill="#ffc"/><rect x="718" y="163" width="2" height="2" fill="#ff6"/><rect x="721" y="163" width="2" height="2" fill="#04c"/><rect x="724" y="163" width="2" height="2" fill="#8cf"/><rect x="727" y="163" width="2" height="2" fill="#fff"/><rect x="730" y="163" width="2" height="2" fill="#fff"/></svg>
<svg class="a" style="left:715px;top:415px" width="25" height="18" viewBox="0 0 90 67" preserveAspectRatio="none">
<defs>
<linearGradient id="p3sky" x1="0" y1="0" x2="0" y2="1"><stop offset="0" stop-color="#5ea6d8"/><stop offset=".3" stop-color="#8fbfe4"/><stop offset=".5" stop-color="#c3d9ee"/><stop offset=".62" stop-color="#e8f0f8"/><stop offset=".75" stop-color="#f4f7fb"/></linearGradient>
<linearGradient id="p3gr" x1="0" y1="0" x2="0" y2="1"><stop offset="0" stop-color="#9a9c9e"/><stop offset="1" stop-color="#6c7074"/></linearGradient>
<filter id="p3b" x="-5%" y="-5%" width="110%" height="110%"><feGaussianBlur stdDeviation="0.45"/></filter>
<clipPath id="p3c"><rect x="0" y="0" width="90" height="67"/></clipPath>
</defs>
<g clip-path="url(#p3c)"><g filter="url(#p3b)">
<rect x="-2" y="-2" width="94" height="54" fill="url(#p3sky)"/>
<ellipse cx="12" cy="27" rx="16" ry="5" fill="#b9d0ea" opacity=".7"/>
<ellipse cx="80" cy="25" rx="14" ry="6" fill="#b0cbe8" opacity=".7"/>
<rect x="-2" y="50" width="94" height="19" fill="url(#p3gr)"/>
<!-- left penguin -->
<path d="M17 16 C13 24 11 36 10 47 C12 44 14 36 16 30 Z" fill="#2b3442"/>
<path d="M18 14 C15 22 13 40 16 56 L24 58 C30 50 31 34 28 22 C27 17 25 14 22 13 Z" fill="#f4f5f7"/>
<path d="M18 14 C16 20 15 30 15 40 C17 30 18 22 21 16 Z" fill="#3a4352"/>
<path d="M19 13 C20 18 23 22 27 22 C27 18 25 14 23 12 Z" fill="#f3b21a"/>
<path d="M18 12 C18 8 22 7 25 8 L34 6 L27 11 C25 13 21 14 18 12 Z" fill="#15181d"/>
<path d="M26 9 L34 6 L27 11 Z" fill="#e79a2a"/>
<path d="M28 23 C31 26 34 28 36 28 L35 31 C32 31 29 29 27 27 Z" fill="#2b3442"/>
<path d="M15 56 l3 5 l3 0 l-1 -4 Z M22 57 l1 5 l3 0 l-1 -5 Z" fill="#2a2d33"/>
<!-- right penguin -->
<path d="M59 13 C57 20 56 32 58 42 C60 50 66 58 72 61 L78 58 C76 46 72 28 69 16 C67 11 62 10 59 13 Z" fill="#273140"/>
<path d="M59 14 C56 22 56 34 58 42 C60 48 64 54 68 58 C66 46 66 30 64 18 Z" fill="#f3f4f4"/>
<path d="M59 14 C57 19 57 26 58 31 C61 27 63 22 63 16 Z" fill="#f4d94a"/>
<path d="M60 9 C62 6 67 6 68 10 C68 13 64 14 61 12 L55 8 Z" fill="#15181d"/>
<path d="M55 8 L61 8.500 L61 10.500 Z" fill="#e7a12a"/>
<path d="M66 8 C68 7 70 9 69 12 C67 11 66 10 66 8 Z" fill="#f0a51f"/>
<path d="M70 60 l1 3 l3 0 l0 -3 Z" fill="#2a2d33"/>
<!-- middle penguin -->
<path d="M45 11 C49 10 53 14 53 20 C57 28 58 40 56 50 C55 56 52 60 50 62 L40 62 C37 54 38 38 41 26 C42 20 44 16 45 11 Z" fill="#465466"/>
<path d="M41 26 C36 28 29 32 25 38 C24 41 26 42 29 39 C33 35 38 33 41 32 Z" fill="#2c3746"/>
<path d="M54 27 C60 34 66 44 71 54 C72 57 70 57 68 54 C63 46 58 40 54 36 Z" fill="#2c3746"/>
<path d="M44 12 C46 10 50 11 51 14 C52 17 49 18 46 17 C44 16 43 14 44 12 Z" fill="#1a1f27"/>
<path d="M37 9 L46 12 L44 14.500 Z" fill="#20252d"/>
<path d="M50 14 C52 15 53 17 52 19 C50 18 49 16 50 14 Z" fill="#e0701e"/>
<path d="M50 24 C54 34 55 46 52 60 L50 62 C52 48 52 34 50 24 Z" fill="#6b7a8c" opacity=".7"/>
<path d="M40 61 l-1 3 l4 0 l0 -3 Z M47 61 l0 3 l4 0 l-1 -3 Z" fill="#23262c"/>
</g></g></svg>
<div class="win" style="left:47px;top:126px;width:306px;height:312px;box-shadow:1px 0 0 #000">
<div class="wglare"></div>
<svg class="a" style="left:9px;top:9px" width="16" height="16" viewBox="0 0 16 16">
<path d="M5 0.500h7l3 3v11h-10z" fill="#f1f1f6" stroke="#b9b9c6" stroke-width=".8"/>
<path d="M12 0.500v3h3" fill="#d6d6e0" stroke="#b0b0be" stroke-width=".6"/>
<ellipse cx="6" cy="9.500" rx="5.500" ry="4.300" fill="#2a2c33"/>
<circle cx="6.800" cy="9.500" r="3.200" fill="#11131a"/>
<path d="M4.300 9.500a2.500 2.500 0 0 1 2.500 -2.500v2.500z" fill="#e03a8a"/>
<path d="M6.800 7a2.500 2.500 0 0 1 2.500 2.500h-2.500z" fill="#3b6fe0"/>
<path d="M9.300 9.500a2.500 2.500 0 0 1 -2.500 2.500v-2.500z" fill="#2fb84a"/>
<path d="M6.800 12a2.500 2.500 0 0 1 -2.500 -2.500h2.500z" fill="#25b0c0"/>
</svg>
<div class="wtitle">画像2* @  60% (ラスタ 1)</div>
<div class="wb cl" style="right:8px;width:31px"><svg style="left:9px;top:3px" width="12" height="10" viewBox="0 0 12 10"><path d="M1.500 2.200L10.500 8.300M10.500 2.200L1.500 8.300" stroke="#4a3f4c" stroke-width="4.200" stroke-linecap="butt"/><path d="M2 2.500L10 8M10 2.500L2 8" stroke="#fff" stroke-width="2.400" stroke-linecap="butt"/></svg></div><div class="wb" style="right:41px;width:31px"><svg style="left:9px;top:3px" width="12" height="10" viewBox="0 0 12 10"><rect x="1.500" y="1" width="9" height="7.500" fill="none" stroke="#3d4555" stroke-width="1"/><rect x="2.500" y="2" width="7" height="5.500" fill="none" stroke="#fff" stroke-width="1.600"/><rect x="4" y="3.500" width="4" height="2.500" fill="none" stroke="#3d4555" stroke-width="1"/></svg></div><div class="wb" style="right:74px;width:31px"><svg style="left:8px;top:8px" width="14" height="6" viewBox="0 0 14 6"><rect x="1.500" y="0.500" width="10" height="3.600" rx="1" fill="#fff" stroke="#3d4555" stroke-width="1"/></svg></div>
</div>
<div class="a" style="left:54px;top:155px;width:292px;height:276px;background:#6e6e6e;box-sizing:border-box;border:1px solid #8c8c8c;border-right-color:#fff;border-bottom:2px solid #fff"></div>
<svg class="a" style="left:70px;top:156px;overflow:hidden" width="275" height="17" viewBox="0 0 275 17"><rect width="275" height="17" fill="#6e6e6e"/><path d="M47.5 17v-15M53.5 17v-5M59.5 17v-5M65.5 17v-5M71.5 17v-5M77.5 17v-8M83.5 17v-5M89.5 17v-5M95.5 17v-5M101.5 17v-5M107.5 17v-15M113.5 17v-5M119.5 17v-5M125.5 17v-5M131.5 17v-5M137.5 17v-8M143.5 17v-5M149.5 17v-5M155.5 17v-5M161.5 17v-5M167.5 17v-15M173.5 17v-5M179.5 17v-5M185.5 17v-5M191.5 17v-5M197.5 17v-8M203.5 17v-5M209.5 17v-5M215.5 17v-5M221.5 17v-5M227.5 17v-15" stroke="#fff" stroke-width="1" fill="none" shape-rendering="crispEdges"/><text x="49.0" y="8.5" font-size="8.5" fill="#fff">0</text><text x="109.0" y="8.5" font-size="8.5" fill="#fff">100</text><text x="169.0" y="8.5" font-size="8.5" fill="#fff">200</text><text x="229.0" y="8.5" font-size="8.5" fill="#fff">300</text></svg>
<svg class="a" style="left:55px;top:170px;overflow:hidden" width="17" height="259" viewBox="0 0 17 259"><rect width="17" height="259" fill="#6e6e6e"/><path d="M17 39.5h-15M17 45.5h-5M17 51.5h-5M17 57.5h-5M17 63.5h-5M17 69.5h-8M17 75.5h-5M17 81.5h-5M17 87.5h-5M17 93.5h-5M17 99.5h-15M17 105.5h-5M17 111.5h-5M17 117.5h-5M17 123.5h-5M17 129.5h-8M17 135.5h-5M17 141.5h-5M17 147.5h-5M17 153.5h-5M17 159.5h-15M17 165.5h-5M17 171.5h-5M17 177.5h-5M17 183.5h-5M17 189.5h-8M17 195.5h-5M17 201.5h-5M17 207.5h-5M17 213.5h-5M17 219.5h-15" stroke="#fff" stroke-width="1" fill="none" shape-rendering="crispEdges"/><text x="3" y="46.5" font-size="8.5" fill="#fff">0</text><text x="3" y="106.5" font-size="8.5" fill="#fff">1</text><text x="3" y="116.2" font-size="8.5" fill="#fff">0</text><text x="3" y="125.9" font-size="8.5" fill="#fff">0</text><text x="3" y="166.5" font-size="8.5" fill="#fff">2</text><text x="3" y="176.2" font-size="8.5" fill="#fff">0</text><text x="3" y="185.9" font-size="8.5" fill="#fff">0</text><text x="3" y="226.5" font-size="8.5" fill="#fff">3</text><text x="3" y="236.2" font-size="8.5" fill="#fff">0</text><text x="3" y="245.9" font-size="8.5" fill="#fff">0</text></svg>
<div class="a" style="left:70px;top:170px;width:275px;height:259px;background:#333"></div>
<div class="a" style="left:117px;top:209px;width:180px;height:183px;background:#fff"></div>
<svg class="a" style="left:162px;top:266px" width="90" height="67" viewBox="0 0 90 67" preserveAspectRatio="none">
<defs>
<linearGradient id="p1sky" x1="0" y1="0" x2="0" y2="1"><stop offset="0" stop-color="#5ea6d8"/><stop offset=".3" stop-color="#8fbfe4"/><stop offset=".5" stop-color="#c3d9ee"/><stop offset=".62" stop-color="#e8f0f8"/><stop offset=".75" stop-color="#f4f7fb"/></linearGradient>
<linearGradient id="p1gr" x1="0" y1="0" x2="0" y2="1"><stop offset="0" stop-color="#9a9c9e"/><stop offset="1" stop-color="#6c7074"/></linearGradient>
<filter id="p1b" x="-5%" y="-5%" width="110%" height="110%"><feGaussianBlur stdDeviation="0.45"/></filter>
<clipPath id="p1c"><rect x="0" y="0" width="90" height="67"/></clipPath>
</defs>
<g clip-path="url(#p1c)"><g filter="url(#p1b)">
<rect x="-2" y="-2" width="94" height="54" fill="url(#p1sky)"/>
<ellipse cx="12" cy="27" rx="16" ry="5" fill="#b9d0ea" opacity=".7"/>
<ellipse cx="80" cy="25" rx="14" ry="6" fill="#b0cbe8" opacity=".7"/>
<rect x="-2" y="50" width="94" height="19" fill="url(#p1gr)"/>
<!-- left penguin -->
<path d="M17 16 C13 24 11 36 10 47 C12 44 14 36 16 30 Z" fill="#2b3442"/>
<path d="M18 14 C15 22 13 40 16 56 L24 58 C30 50 31 34 28 22 C27 17 25 14 22 13 Z" fill="#f4f5f7"/>
<path d="M18 14 C16 20 15 30 15 40 C17 30 18 22 21 16 Z" fill="#3a4352"/>
<path d="M19 13 C20 18 23 22 27 22 C27 18 25 14 23 12 Z" fill="#f3b21a"/>
<path d="M18 12 C18 8 22 7 25 8 L34 6 L27 11 C25 13 21 14 18 12 Z" fill="#15181d"/>
<path d="M26 9 L34 6 L27 11 Z" fill="#e79a2a"/>
<path d="M28 23 C31 26 34 28 36 28 L35 31 C32 31 29 29 27 27 Z" fill="#2b3442"/>
<path d="M15 56 l3 5 l3 0 l-1 -4 Z M22 57 l1 5 l3 0 l-1 -5 Z" fill="#2a2d33"/>
<!-- right penguin -->
<path d="M59 13 C57 20 56 32 58 42 C60 50 66 58 72 61 L78 58 C76 46 72 28 69 16 C67 11 62 10 59 13 Z" fill="#273140"/>
<path d="M59 14 C56 22 56 34 58 42 C60 48 64 54 68 58 C66 46 66 30 64 18 Z" fill="#f3f4f4"/>
<path d="M59 14 C57 19 57 26 58 31 C61 27 63 22 63 16 Z" fill="#f4d94a"/>
<path d="M60 9 C62 6 67 6 68 10 C68 13 64 14 61 12 L55 8 Z" fill="#15181d"/>
<path d="M55 8 L61 8.500 L61 10.500 Z" fill="#e7a12a"/>
<path d="M66 8 C68 7 70 9 69 12 C67 11 66 10 66 8 Z" fill="#f0a51f"/>
<path d="M70 60 l1 3 l3 0 l0 -3 Z" fill="#2a2d33"/>
<!-- middle penguin -->
<path d="M45 11 C49 10 53 14 53 20 C57 28 58 40 56 50 C55 56 52 60 50 62 L40 62 C37 54 38 38 41 26 C42 20 44 16 45 11 Z" fill="#465466"/>
<path d="M41 26 C36 28 29 32 25 38 C24 41 26 42 29 39 C33 35 38 33 41 32 Z" fill="#2c3746"/>
<path d="M54 27 C60 34 66 44 71 54 C72 57 70 57 68 54 C63 46 58 40 54 36 Z" fill="#2c3746"/>
<path d="M44 12 C46 10 50 11 51 14 C52 17 49 18 46 17 C44 16 43 14 44 12 Z" fill="#1a1f27"/>
<path d="M37 9 L46 12 L44 14.500 Z" fill="#20252d"/>
<path d="M50 14 C52 15 53 17 52 19 C50 18 49 16 50 14 Z" fill="#e0701e"/>
<path d="M50 24 C54 34 55 46 52 60 L50 62 C52 48 52 34 50 24 Z" fill="#6b7a8c" opacity=".7"/>
<path d="M40 61 l-1 3 l4 0 l0 -3 Z M47 61 l0 3 l4 0 l-1 -3 Z" fill="#23262c"/>
</g></g></svg>
<div class="mg" style="left:70px;top:170px;width:275px;height:259px"></div>
<div class="mg" style="left:117px;top:209px;width:180px;height:183px"></div>
<svg class="a" style="left:200px;top:170px" width="18" height="42" viewBox="0 0 18 42"><path d="M8.500 3L16.500 14H10.200V27.500H16.500L8.500 39L0.500 27.500H6.800V14H0.500Z" fill="#ff00ff"/></svg>
<div class="a" style="left:435px;top:161px;width:246px;height:276px;background:#333"></div>
<div class="a" style="left:435px;top:161px;width:246px;height:7px;background:linear-gradient(180deg,#6b6b6b,#555);border-bottom:1px solid #2a2a2a"></div>
<div class="a" style="left:435px;top:169px;width:10px;height:268px;background:#696969;border-right:2px solid #2b2b2b"></div>
<div class="a" style="left:435px;top:183px;width:9px;height:20px;background:linear-gradient(180deg,#b7c6de,#9fb2d2);border-radius:0 2px 2px 0"></div>
<div class="dd" style="left:435px;top:191px"></div>
<div class="dd" style="left:435px;top:215px"></div>
<div class="dd" style="left:435px;top:239px"></div>
<div class="dd" style="left:435px;top:311px"></div>
<div class="dd" style="left:435px;top:383px"></div>
<div class="dd" style="left:435px;top:407px"></div>
<div class="dd" style="left:435px;top:431px"></div>
<div class="win" style="left:449px;top:171px;width:218px;height:240px;border-right-color:#35c4e0;border-bottom-color:#35c4e0">
<div class="wglare"></div>
<svg class="a" style="left:9px;top:9px" width="16" height="16" viewBox="0 0 16 16">
<path d="M5 0.500h7l3 3v11h-10z" fill="#f1f1f6" stroke="#b9b9c6" stroke-width=".8"/>
<path d="M12 0.500v3h3" fill="#d6d6e0" stroke="#b0b0be" stroke-width=".6"/>
<ellipse cx="6" cy="9.500" rx="5.500" ry="4.300" fill="#2a2c33"/>
<circle cx="6.800" cy="9.500" r="3.200" fill="#11131a"/>
<path d="M4.300 9.500a2.500 2.500 0 0 1 2.500 -2.500v2.500z" fill="#e03a8a"/>
<path d="M6.800 7a2.500 2.500 0 0 1 2.500 2.500h-2.500z" fill="#3b6fe0"/>
<path d="M9.300 9.500a2.500 2.500 0 0 1 -2.500 2.500v-2.500z" fill="#2fb84a"/>
<path d="M6.800 12a2.500 2.500 0 0 1 -2.500 -2.500h2.500z" fill="#25b0c0"/>
</svg>
<div class="wtitle">画像2* @  ...</div>
<div class="wb cl" style="right:9px;width:31px"><svg style="left:9px;top:3px" width="12" height="10" viewBox="0 0 12 10"><path d="M1.500 2.200L10.500 8.300M10.500 2.200L1.500 8.300" stroke="#4a3f4c" stroke-width="4.200" stroke-linecap="butt"/><path d="M2 2.500L10 8M10 2.500L2 8" stroke="#fff" stroke-width="2.400" stroke-linecap="butt"/></svg></div><div class="wb" style="right:42px;width:31px"><svg style="left:9px;top:3px" width="12" height="10" viewBox="0 0 12 10"><rect x="1.500" y="1" width="9" height="7.500" fill="none" stroke="#3d4555" stroke-width="1"/><rect x="2.500" y="2" width="7" height="5.500" fill="none" stroke="#fff" stroke-width="1.600"/><rect x="4" y="3.500" width="4" height="2.500" fill="none" stroke="#3d4555" stroke-width="1"/></svg></div><div class="wb" style="right:75px;width:31px"><svg style="left:8px;top:8px" width="14" height="6" viewBox="0 0 14 6"><rect x="1.500" y="0.500" width="10" height="3.600" rx="1" fill="#fff" stroke="#3d4555" stroke-width="1"/></svg></div>
</div>
<div class="a" style="left:457px;top:201px;width:201px;height:202px;background:#555"></div>
<svg class="a" style="left:474px;top:201px;overflow:hidden" width="183" height="17" viewBox="0 0 183 17"><rect width="183" height="17" fill="#585858"/><path d="M1.5 17v-15M7.5 17v-5M13.5 17v-5M19.5 17v-5M25.5 17v-5M31.5 17v-8M37.5 17v-5M43.5 17v-5M49.5 17v-5M55.5 17v-5M61.5 17v-15M67.5 17v-5M73.5 17v-5M79.5 17v-5M85.5 17v-5M91.5 17v-8M97.5 17v-5M103.5 17v-5M109.5 17v-5M115.5 17v-5M121.5 17v-15M127.5 17v-5M133.5 17v-5M139.5 17v-5M145.5 17v-5M151.5 17v-8M157.5 17v-5M163.5 17v-5M169.5 17v-5M175.5 17v-5M181.5 17v-15" stroke="#fff" stroke-width="1" fill="none" shape-rendering="crispEdges"/><text x="3.0" y="8.5" font-size="8.5" fill="#fff">0</text><text x="63.0" y="8.5" font-size="8.5" fill="#fff">100</text><text x="123.0" y="8.5" font-size="8.5" fill="#fff">200</text></svg>
<svg class="a" style="left:457px;top:218px;overflow:hidden" width="17" height="184" viewBox="0 0 17 184"><rect width="17" height="184" fill="#585858"/><path d="M17 1.5h-15M17 7.5h-5M17 13.5h-5M17 19.5h-5M17 25.5h-5M17 31.5h-8M17 37.5h-5M17 43.5h-5M17 49.5h-5M17 55.5h-5M17 61.5h-15M17 67.5h-5M17 73.5h-5M17 79.5h-5M17 85.5h-5M17 91.5h-8M17 97.5h-5M17 103.5h-5M17 109.5h-5M17 115.5h-5M17 121.5h-15M17 127.5h-5M17 133.5h-5M17 139.5h-5M17 145.5h-5M17 151.5h-8M17 157.5h-5M17 163.5h-5M17 169.5h-5M17 175.5h-5M17 181.5h-15" stroke="#fff" stroke-width="1" fill="none" shape-rendering="crispEdges"/><text x="3" y="8.5" font-size="8.5" fill="#fff">0</text><text x="3" y="68.5" font-size="8.5" fill="#fff">1</text><text x="3" y="78.2" font-size="8.5" fill="#fff">0</text><text x="3" y="87.9" font-size="8.5" fill="#fff">0</text><text x="3" y="128.5" font-size="8.5" fill="#fff">2</text><text x="3" y="138.2" font-size="8.5" fill="#fff">0</text><text x="3" y="147.9" font-size="8.5" fill="#fff">0</text></svg>
<div class="a" style="left:474px;top:218px;width:184px;height:184px;background:#fff;box-sizing:border-box;border:1px solid #222;border-right:2px solid #8a8a8a;border-bottom:2px solid #8a8a8a"></div>
<svg class="a" style="left:520px;top:276px" width="90" height="67" viewBox="0 0 90 67" preserveAspectRatio="none">
<defs>
<linearGradient id="p2sky" x1="0" y1="0" x2="0" y2="1"><stop offset="0" stop-color="#5ea6d8"/><stop offset=".3" stop-color="#8fbfe4"/><stop offset=".5" stop-color="#c3d9ee"/><stop offset=".62" stop-color="#e8f0f8"/><stop offset=".75" stop-color="#f4f7fb"/></linearGradient>
<linearGradient id="p2gr" x1="0" y1="0" x2="0" y2="1"><stop offset="0" stop-color="#9a9c9e"/><stop offset="1" stop-color="#6c7074"/></linearGradient>
<filter id="p2b" x="-5%" y="-5%" width="110%" height="110%"><feGaussianBlur stdDeviation="0.45"/></filter>
<clipPath id="p2c"><rect x="0" y="0" width="90" height="67"/></clipPath>
</defs>
<g clip-path="url(#p2c)"><g filter="url(#p2b)">
<rect x="-2" y="-2" width="94" height="54" fill="url(#p2sky)"/>
<ellipse cx="12" cy="27" rx="16" ry="5" fill="#b9d0ea" opacity=".7"/>
<ellipse cx="80" cy="25" rx="14" ry="6" fill="#b0cbe8" opacity=".7"/>
<rect x="-2" y="50" width="94" height="19" fill="url(#p2gr)"/>
<!-- left penguin -->
<path d="M17 16 C13 24 11 36 10 47 C12 44 14 36 16 30 Z" fill="#2b3442"/>
<path d="M18 14 C15 22 13 40 16 56 L24 58 C30 50 31 34 28 22 C27 17 25 14 22 13 Z" fill="#f4f5f7"/>
<path d="M18 14 C16 20 15 30 15 40 C17 30 18 22 21 16 Z" fill="#3a4352"/>
<path d="M19 13 C20 18 23 22 27 22 C27 18 25 14 23 12 Z" fill="#f3b21a"/>
<path d="M18 12 C18 8 22 7 25 8 L34 6 L27 11 C25 13 21 14 18 12 Z" fill="#15181d"/>
<path d="M26 9 L34 6 L27 11 Z" fill="#e79a2a"/>
<path d="M28 23 C31 26 34 28 36 28 L35 31 C32 31 29 29 27 27 Z" fill="#2b3442"/>
<path d="M15 56 l3 5 l3 0 l-1 -4 Z M22 57 l1 5 l3 0 l-1 -5 Z" fill="#2a2d33"/>
<!-- right penguin -->
<path d="M59 13 C57 20 56 32 58 42 C60 50 66 58 72 61 L78 58 C76 46 72 28 69 16 C67 11 62 10 59 13 Z" fill="#273140"/>
<path d="M59 14 C56 22 56 34 58 42 C60 48 64 54 68 58 C66 46 66 30 64 18 Z" fill="#f3f4f4"/>
<path d="M59 14 C57 19 57 26 58 31 C61 27 63 22 63 16 Z" fill="#f4d94a"/>
<path d="M60 9 C62 6 67 6 68 10 C68 13 64 14 61 12 L55 8 Z" fill="#15181d"/>
<path d="M55 8 L61 8.500 L61 10.500 Z" fill="#e7a12a"/>
<path d="M66 8 C68 7 70 9 69 12 C67 11 66 10 66 8 Z" fill="#f0a51f"/>
<path d="M70 60 l1 3 l3 0 l0 -3 Z" fill="#2a2d33"/>
<!-- middle penguin -->
<path d="M45 11 C49 10 53 14 53 20 C57 28 58 40 56 50 C55 56 52 60 50 62 L40 62 C37 54 38 38 41 26 C42 20 44 16 45 11 Z" fill="#465466"/>
<path d="M41 26 C36 28 29 32 25 38 C24 41 26 42 29 39 C33 35 38 33 41 32 Z" fill="#2c3746"/>
<path d="M54 27 C60 34 66 44 71 54 C72 57 70 57 68 54 C63 46 58 40 54 36 Z" fill="#2c3746"/>
<path d="M44 12 C46 10 50 11 51 14 C52 17 49 18 46 17 C44 16 43 14 44 12 Z" fill="#1a1f27"/>
<path d="M37 9 L46 12 L44 14.500 Z" fill="#20252d"/>
<path d="M50 14 C52 15 53 17 52 19 C50 18 49 16 50 14 Z" fill="#e0701e"/>
<path d="M50 24 C54 34 55 46 52 60 L50 62 C52 48 52 34 50 24 Z" fill="#6b7a8c" opacity=".7"/>
<path d="M40 61 l-1 3 l4 0 l0 -3 Z M47 61 l0 3 l4 0 l-1 -3 Z" fill="#23262c"/>
</g></g></svg>
<div class="red" style="left:44px;top:121px;width:316px;height:320px"></div>
<div class="red" style="left:432px;top:158px;width:252px;height:282px"></div>
<div class="red" style="left:413px;top:79px;width:42px;height:42px"></div>
<svg class="a" style="left:0;top:0" width="770" height="550" viewBox="0 0 770 550"><path d="M413 99.500H215.500V110" stroke="#ff0000" stroke-width="3" fill="none"/><path d="M207.500 109H223.500L215.500 121.500Z" fill="#ff0000"/><path d="M360 296.500H422" stroke="#ff0000" stroke-width="3"/><path d="M421 288.500V304.500L433 296.500Z" fill="#ff0000"/></svg>
<div id="band" class="a"></div>
<div id="caption" class="a"><div id="captxt" class="a">画像サイズと画像ウィンドウサイズが異なる場合は、「画像<br>サイズに合わせる」ボタンをクリックすると、サイズが同じに<br>なります。</div></div>
</div>
</body>
</html>
